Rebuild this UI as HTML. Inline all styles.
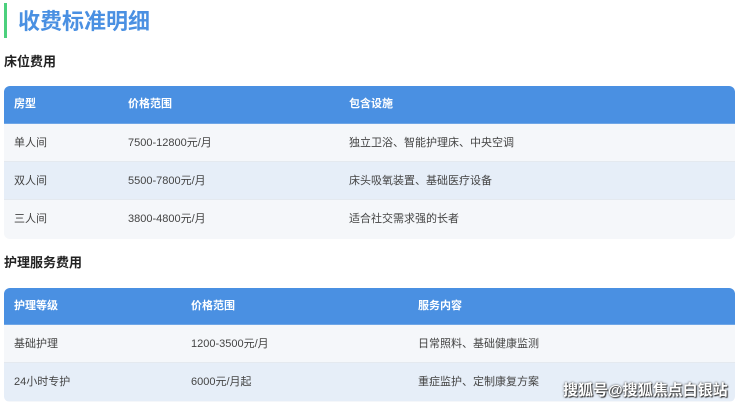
<!DOCTYPE html>
<html><head><meta charset="utf-8"><style>
*{margin:0;padding:0;box-sizing:border-box}
body{width:740px;height:405px;background:#fff;font-family:"Liberation Sans","Noto Sans CJK SC",sans-serif;position:relative;overflow:hidden;color:#333}
.bar{position:absolute;left:4px;top:3px;width:3px;height:35px;background:#4cd07d}
.title{position:absolute;left:18px;top:7px;font-size:22px;font-weight:bold;color:#4a90e2;line-height:30px}
.h{position:absolute;left:4px;font-size:13px;font-weight:bold;color:#222;line-height:18px}
.tbl{position:absolute;left:4px;width:731px;border-radius:6px;overflow:hidden;background:#f5f7fa}
.row{position:relative;height:38px;font-size:11px;line-height:38px;color:#444}
.row span{position:absolute;top:0}
.hd{background:#4a90e2;color:#fff;font-weight:bold;height:38px;line-height:37px;border-bottom:1px solid #6fa6e6}
.o{background:#f5f7fa;border-bottom:1px solid #e4e9ef}
.e{background:#e6eef8;border-bottom:1px solid #e4e9ef}
.wm{position:absolute;left:563px;top:379px;font-size:15px;color:#fff;font-weight:bold;text-shadow:0 0 2px #333,1px 1px 1px #333;letter-spacing:0}
</style></head><body>
<div class="bar"></div>
<div class="title">收费标准明细</div>
<div class="h" style="top:53px">床位费用</div>
<div class="tbl" style="top:86px;height:153px">
<div class="row hd"><span style="left:10px">房型</span><span style="left:124px">价格范围</span><span style="left:345px">包含设施</span></div>
<div class="row o"><span style="left:10px">单人间</span><span style="left:124px">7500-12800元/月</span><span style="left:345px">独立卫浴、智能护理床、中央空调</span></div>
<div class="row e"><span style="left:10px">双人间</span><span style="left:124px">5500-7800元/月</span><span style="left:345px">床头吸氧装置、基础医疗设备</span></div>
<div class="row o" style="border:0"><span style="left:10px">三人间</span><span style="left:124px">3800-4800元/月</span><span style="left:345px">适合社交需求强的长者</span></div>
</div>
<div class="h" style="top:254px">护理服务费用</div>
<div class="tbl" style="top:288px;height:114px">
<div class="row hd" style="height:37px"><span style="left:10px">护理等级</span><span style="left:187px">价格范围</span><span style="left:414px">服务内容</span></div>
<div class="row o"><span style="left:10px">基础护理</span><span style="left:187px">1200-3500元/月</span><span style="left:414px">日常照料、基础健康监测</span></div>
<div class="row e" style="border:0"><span style="left:10px">24小时专护</span><span style="left:187px">6000元/月起</span><span style="left:414px">重症监护、定制康复方案</span></div>
</div>
<div class="wm">搜狐号@搜狐焦点白银站</div>
</body></html>
